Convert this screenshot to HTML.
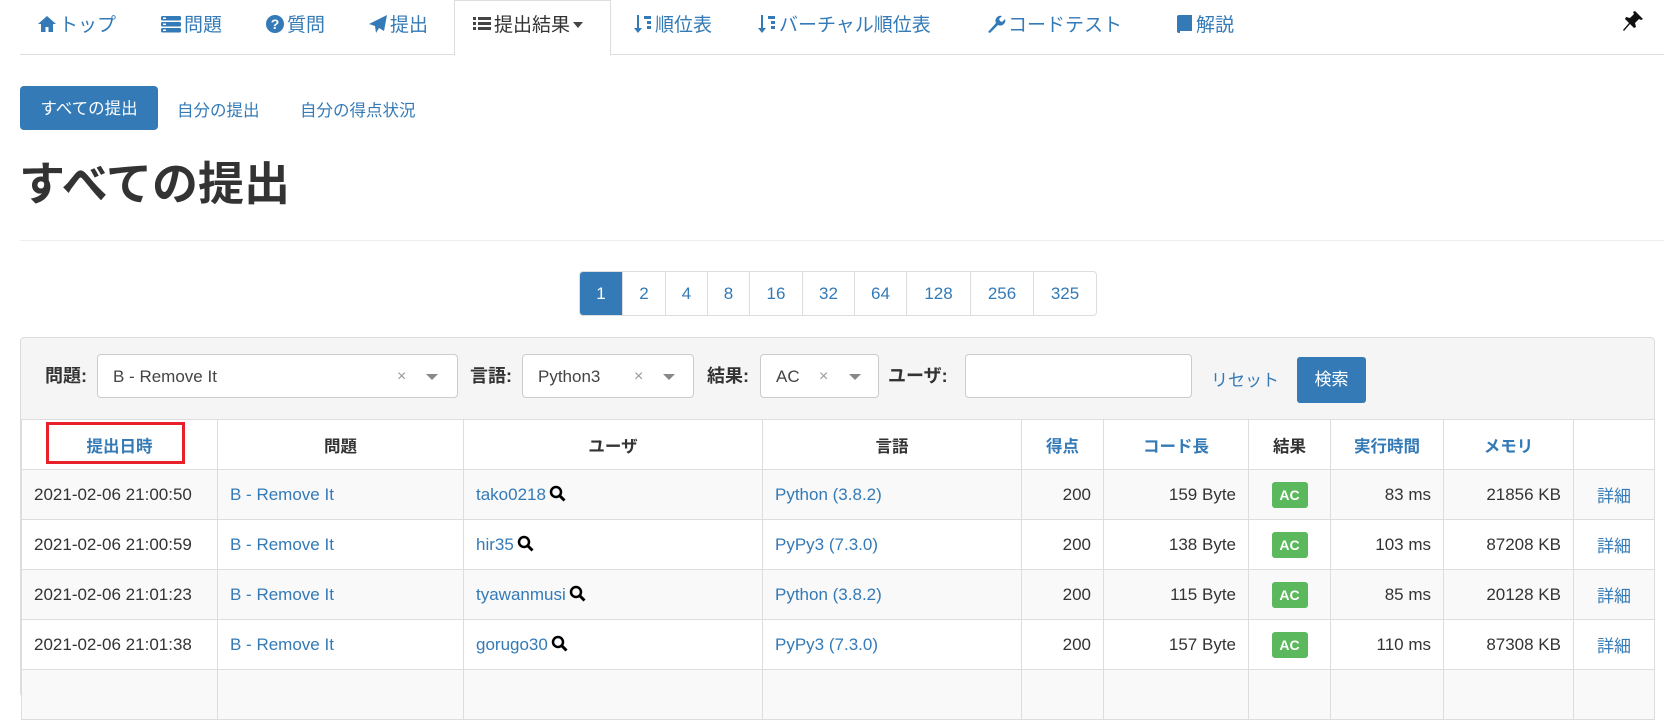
<!DOCTYPE html>
<html><head><meta charset="utf-8">
<style>
*{box-sizing:border-box;margin:0;padding:0}
body{width:1664px;height:679px;overflow:hidden;background:#fff;font-family:"Liberation Sans","Noto Sans CJK JP",sans-serif;color:#333;font-size:17px;position:relative}
a{color:#337ab7;text-decoration:none}
.abs{position:absolute}
.nav{position:absolute;left:20px;top:0;width:1644px;height:55px;border-bottom:1px solid #ddd}
.ni{position:absolute;top:10px;font-size:19px;color:#337ab7;white-space:nowrap;display:flex;align-items:center;gap:2px}
.ni svg{display:block}
.tab{position:absolute;left:454px;top:0;width:157px;height:56px;background:#fff;border:1px solid #ddd;border-bottom-color:#fff}
.pill{position:absolute;left:20px;top:86px;width:138px;height:44px;background:#337ab7;color:#fff;border-radius:4px;font-size:16.5px;line-height:46px;text-align:center}
h1{position:absolute;left:19px;top:156px;font-size:46px;font-weight:bold;line-height:56px;color:#333}
.hr{position:absolute;left:20px;top:240px;width:1644px;border-top:1px solid #eee}
.pg{position:absolute;left:579px;top:271px;height:45px;display:flex;border:1px solid #ddd;border-radius:4px;overflow:hidden}
.pg span{display:block;height:43px;line-height:43px;text-align:center;color:#337ab7;border-left:1px solid #ddd;font-size:17px}
.pg span:first-child{border-left:none;background:#337ab7;color:#fff}
.panel{position:absolute;left:20px;top:337px;width:1635px;height:360px;border:1px solid #ddd;border-radius:4px;background:#f5f5f5}
.lbl{position:absolute;top:362px;font-weight:bold;font-size:18px}
.sel{position:absolute;top:354px;height:44px;background:#fff;border:1px solid #ccc;border-radius:4px;font-size:17px;line-height:44px;padding-left:15px;color:#444}
.sel .x{position:absolute;top:0;color:#999;font-size:16px}
.sel .c{position:absolute;top:19px;width:0;height:0;border-left:6px solid transparent;border-right:6px solid transparent;border-top:6px solid #888}
table{position:absolute;left:21px;top:419px;border-collapse:collapse;table-layout:fixed;width:1633px;background:#fff}
td,th{height:50px;border:1px solid #ddd;font-size:17px;padding:0 12px;white-space:nowrap;overflow:hidden}
th{font-weight:bold;text-align:center;font-size:16.5px}
tr.g td{background:#f9f9f9}
.r{text-align:right}.c{text-align:center}
.ac{display:inline-block;background:#5cb85c;color:#fff;font-weight:bold;font-size:14px;width:36px;height:26px;line-height:26px;border-radius:3px;text-align:center}
.mg{display:inline-block;vertical-align:-2px;margin-left:3px}
</style></head><body>
<div class="nav"></div>
<div class="tab"></div>
<div class="ni" style="left:37px"><svg width="20" height="20" viewBox="0 0 20 20"><path d="M10 2L1 10h3v8h4.5v-5h3v5H16v-8h3z" fill="#337ab7"/></svg>トップ</div>
<div class="ni" style="left:160px"><svg width="22" height="20" viewBox="0 0 22 20"><rect x="1" y="2" width="20" height="4.5" rx="1.5" fill="#337ab7"/><rect x="1" y="8" width="20" height="4.5" rx="1.5" fill="#337ab7"/><rect x="1" y="14" width="20" height="4.5" rx="1.5" fill="#337ab7"/><rect x="3" y="3.5" width="3" height="1.5" fill="#fff"/><rect x="3" y="9.5" width="3" height="1.5" fill="#fff"/><rect x="3" y="15.5" width="3" height="1.5" fill="#fff"/></svg>問題</div>
<div class="ni" style="left:265px"><svg width="20" height="20" viewBox="0 0 20 20"><circle cx="10" cy="10" r="9" fill="#337ab7"/><text x="10" y="15" font-size="14" font-weight="bold" text-anchor="middle" fill="#fff" font-family="Liberation Sans">?</text></svg>質問</div>
<div class="ni" style="left:368px"><svg width="20" height="20" viewBox="0 0 20 20"><path d="M19 1L1 10l6 2 1 7 3-5 5 3z" fill="#337ab7"/></svg>提出</div>
<div class="ni" style="left:472px;color:#333"><svg width="20" height="20" viewBox="0 0 20 20" fill="#444"><rect x="1" y="3" width="3" height="3"/><rect x="6" y="3" width="13" height="3"/><rect x="1" y="8" width="3" height="3"/><rect x="6" y="8" width="13" height="3"/><rect x="1" y="13" width="3" height="3"/><rect x="6" y="13" width="13" height="3"/></svg>提出結果<svg width="12" height="10" viewBox="0 0 12 10"><path d="M1 3h10l-5 6z" fill="#444"/></svg></div>
<div class="ni" style="left:633px"><svg width="20" height="20" viewBox="0 0 20 20" fill="#337ab7"><path d="M4 1h2v13h3l-4 5-4-5h3z"/><rect x="11" y="2" width="7" height="3"/><rect x="14" y="7" width="4" height="3"/><rect x="14" y="12" width="4" height="3"/></svg>順位表</div>
<div class="ni" style="left:757px"><svg width="20" height="20" viewBox="0 0 20 20" fill="#337ab7"><path d="M4 1h2v13h3l-4 5-4-5h3z"/><rect x="11" y="2" width="7" height="3"/><rect x="14" y="7" width="4" height="3"/><rect x="14" y="12" width="4" height="3"/></svg>バーチャル順位表</div>
<div class="ni" style="left:986px"><svg width="20" height="20" viewBox="0 0 20 20"><path d="M2 18l8-9a5 5 0 0 1 6-7l-3 3 1 2 2 1 3-3a5 5 0 0 1-7 6l-8 8z" fill="#337ab7"/></svg>コードテスト</div>
<div class="ni" style="left:1176px"><svg width="18" height="20" viewBox="0 0 18 20"><path d="M3 1h13v16H4v2H3a2 2 0 0 1-2-2V3a2 2 0 0 1 2-2z" fill="#337ab7"/></svg>解説</div>
<div class="ni" style="left:1622px"><svg width="22" height="22" viewBox="0 0 22 22"><path d="M13 1l8 8-2 1-2-1-4 4 1 4-2 1-4-4-6 7-1-1 6-7-4-4 1-2 4 1 4-4-1-2z" fill="#111"/></svg></div>

<div class="pill">すべての提出</div>
<a class="abs" style="left:177px;top:97px;font-size:16.5px">自分の提出</a>
<a class="abs" style="left:300px;top:97px;font-size:16.5px">自分の得点状況</a>
<h1>すべての提出</h1>
<div class="hr"></div>
<div class="pg"><span style="width:42px">1</span><span style="width:43px">2</span><span style="width:42px">4</span><span style="width:42px">8</span><span style="width:53px">16</span><span style="width:52px">32</span><span style="width:52px">64</span><span style="width:64px">128</span><span style="width:63px">256</span><span style="width:63px">325</span></div>

<div class="panel"></div>
<div class="lbl" style="left:45px">問題:</div>
<div class="sel" style="left:97px;width:361px">B - Remove It<span class="x" style="left:299px">×</span><span class="c" style="left:328px"></span></div>
<div class="lbl" style="left:470px">言語:</div>
<div class="sel" style="left:522px;width:172px">Python3<span class="x" style="left:111px">×</span><span class="c" style="left:140px"></span></div>
<div class="lbl" style="left:707px">結果:</div>
<div class="sel" style="left:760px;width:119px">AC<span class="x" style="left:58px">×</span><span class="c" style="left:88px"></span></div>
<div class="lbl" style="left:888px">ユーザ:</div>
<div class="sel" style="left:965px;width:227px"></div>
<a class="abs" style="left:1211px;top:366px;font-size:17px">リセット</a>
<div class="abs" style="left:1297px;top:357px;width:69px;height:46px;background:#337ab7;border-radius:3px;color:#fff;line-height:46px;text-align:center;font-size:17px">検索</div>

<table>
<colgroup><col style="width:196px"><col style="width:246px"><col style="width:299px"><col style="width:259px"><col style="width:82px"><col style="width:145px"><col style="width:82px"><col style="width:113px"><col style="width:130px"><col style="width:81px"></colgroup>
<tr><th><a>提出日時</a></th><th>問題</th><th>ユーザ</th><th>言語</th><th><a>得点</a></th><th><a>コード長</a></th><th>結果</th><th><a>実行時間</a></th><th><a>メモリ</a></th><th></th></tr>
<tr class="g"><td>2021-02-06 21:00:50</td><td><a>B - Remove It</a></td><td><a>tako0218</a><svg class="mg" width="17" height="17" viewBox="0 0 17 17"><circle cx="7" cy="7" r="5" fill="none" stroke="#000" stroke-width="2.5"/><path d="M10.5 10.5l5 5" stroke="#000" stroke-width="3"/></svg></td><td><a>Python (3.8.2)</a></td><td class="r">200</td><td class="r">159 Byte</td><td class="c"><span class="ac">AC</span></td><td class="r">83 ms</td><td class="r">21856 KB</td><td class="c"><a>詳細</a></td></tr>
<tr><td>2021-02-06 21:00:59</td><td><a>B - Remove It</a></td><td><a>hir35</a><svg class="mg" width="17" height="17" viewBox="0 0 17 17"><circle cx="7" cy="7" r="5" fill="none" stroke="#000" stroke-width="2.5"/><path d="M10.5 10.5l5 5" stroke="#000" stroke-width="3"/></svg></td><td><a>PyPy3 (7.3.0)</a></td><td class="r">200</td><td class="r">138 Byte</td><td class="c"><span class="ac">AC</span></td><td class="r">103 ms</td><td class="r">87208 KB</td><td class="c"><a>詳細</a></td></tr>
<tr class="g"><td>2021-02-06 21:01:23</td><td><a>B - Remove It</a></td><td><a>tyawanmusi</a><svg class="mg" width="17" height="17" viewBox="0 0 17 17"><circle cx="7" cy="7" r="5" fill="none" stroke="#000" stroke-width="2.5"/><path d="M10.5 10.5l5 5" stroke="#000" stroke-width="3"/></svg></td><td><a>Python (3.8.2)</a></td><td class="r">200</td><td class="r">115 Byte</td><td class="c"><span class="ac">AC</span></td><td class="r">85 ms</td><td class="r">20128 KB</td><td class="c"><a>詳細</a></td></tr>
<tr><td>2021-02-06 21:01:38</td><td><a>B - Remove It</a></td><td><a>gorugo30</a><svg class="mg" width="17" height="17" viewBox="0 0 17 17"><circle cx="7" cy="7" r="5" fill="none" stroke="#000" stroke-width="2.5"/><path d="M10.5 10.5l5 5" stroke="#000" stroke-width="3"/></svg></td><td><a>PyPy3 (7.3.0)</a></td><td class="r">200</td><td class="r">157 Byte</td><td class="c"><span class="ac">AC</span></td><td class="r">110 ms</td><td class="r">87308 KB</td><td class="c"><a>詳細</a></td></tr>
<tr class="g"><td></td><td></td><td></td><td></td><td></td><td></td><td></td><td></td><td></td><td></td></tr>
</table>
<div class="abs" style="left:46px;top:422px;width:139px;height:42px;border:3px solid #e8202a"></div>
</body></html>
